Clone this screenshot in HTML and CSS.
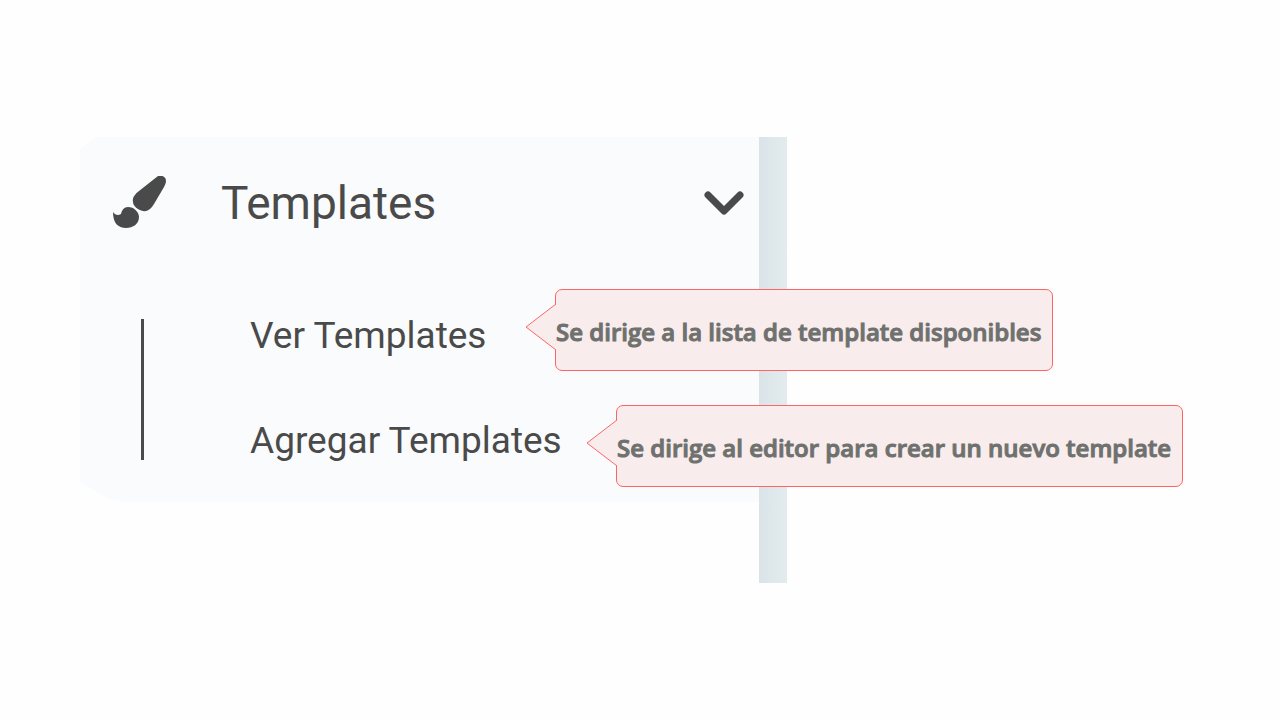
FILE: index.html
```html
<!DOCTYPE html>
<html lang="es">
<head>
    <meta charset="UTF-8">
    <meta name="viewport" content="width=device-width, initial-scale=1.0">
    <title>Templates</title>
    <link rel="stylesheet" href="styles.css">
</head>
<body>
    <main class="page">
        <nav class="menu">
            <button type="button" class="menu-header" aria-expanded="true" aria-controls="submenu">
                <svg class="icon-brush" viewBox="0 0 54 54" aria-hidden="true">
                    <path d="M46 0C49 -1 54 0 54 5C54 7 53 9 52 11L42 28C39 33 35 36 31 35C26 34 21 30 21 26C20 22 23 18 27 15Z"/>
                    <path d="M1 36C3 39 6 40 9 38C10 34 12 31 16 31C22 31 27 36 27 41C27 48 21 52 14 52C6 52 1 47 1 36Z"/>
                </svg>
                <span class="menu-title">Templates</span>
                <svg class="icon-chevron" viewBox="0 0 40 24" aria-hidden="true">
                    <path d="M4 4L20 20L36 4"/>
                </svg>
            </button>
            <ul class="submenu" id="submenu">
                <li>
                    <a href="#ver">Ver Templates</a>
                    <div class="callout callout-ver">
                        <svg class="callout-arrow" viewBox="0 0 31 48" aria-hidden="true">
                            <path d="M31 1L1 24L31 47"/>
                        </svg>
                        <span>Se dirige a la lista de template disponibles</span>
                    </div>
                </li>
                <li>
                    <a href="#agregar">Agregar Templates</a>
                    <div class="callout callout-agregar">
                        <svg class="callout-arrow" viewBox="0 0 31 48" aria-hidden="true">
                            <path d="M31 1L1 24L31 47"/>
                        </svg>
                        <span>Se dirige al editor para crear un nuevo template</span>
                    </div>
                </li>
            </ul>
        </nav>
        <div class="divider"></div>
    </main>
</body>
</html>
```
FILE: styles.css
```css
* {
    box-sizing: border-box;
}

body {
    margin: 0;
    background-color: #fefefe;
    color: #4a4a4a;
    font-family: Roboto, sans-serif;
}

.page {
    display: flex;
    align-items: flex-start;
    padding: 137px 80px;
}

.menu {
    position: relative;
    flex: 0 0 auto;
    width: calc(50vw + 39px);
    min-width: 640px;
    padding-bottom: 42px;
}

/* fondo con las esquinas izquierdas recortadas */
.menu::before {
    content: "";
    position: absolute;
    inset: 0;
    background-color: #fafbfd;
    clip-path: polygon(16px 0, 100% 0, 100% 100%, 46px 100%, 28px calc(100% - 3px), 0 calc(100% - 21px), 0 12px);
}

.menu-header {
    position: relative;
    display: flex;
    align-items: center;
    width: 100%;
    height: 132px;
    padding: 0 15px 0 32px;
    border: none;
    background: none;
    color: inherit;
    font-family: inherit;
    font-size: 46px;
    text-align: left;
    cursor: pointer;
}

.icon-brush {
    width: 54px;
    height: 54px;
    margin-right: 55px;
    fill: #4a4a4a;
}

.icon-chevron {
    width: 40px;
    height: 24px;
    margin-left: auto;
    fill: none;
    stroke: #4a4a4a;
    stroke-width: 7;
    stroke-linecap: round;
    stroke-linejoin: round;
}

.submenu {
    display: grid;
    gap: 69px;
    margin: 50px 0 0 61px;
    padding: 0 0 0 106px;
    border-left: 3px solid #4a4a4a;
    list-style: none;
    position: relative;
}

.submenu li {
    position: relative;
    height: 36px;
    font-size: 37px;
    line-height: 34px;
}

.submenu a {
    color: inherit;
    text-decoration: none;
}

.divider {
    width: 28px;
    height: 446px;
    background: linear-gradient(to right, #dae4e8, #e3ebee);
}

.callout {
    position: absolute;
    z-index: 1;
    display: flex;
    align-items: center;
    height: 82px;
    padding: 3px 11px 0 0;
    border: 1px solid #ff6464;
    border-radius: 7px;
    background-color: #f9ecec;
    color: #6f716f;
    font-family: "Open Sans", sans-serif;
    font-size: 24px;
    font-weight: 600;
    -webkit-text-stroke: 1px #6f716f;
    white-space: nowrap;
}

.callout-ver {
    top: -30px;
    left: 305px;
}

.callout-agregar {
    top: -19px;
    left: 366px;
}

.callout-arrow {
    position: absolute;
    top: 13px;
    left: -31px;
    width: 31px;
    height: 48px;
    fill: #f9ecec;
    stroke: #ff6464;
}
```
